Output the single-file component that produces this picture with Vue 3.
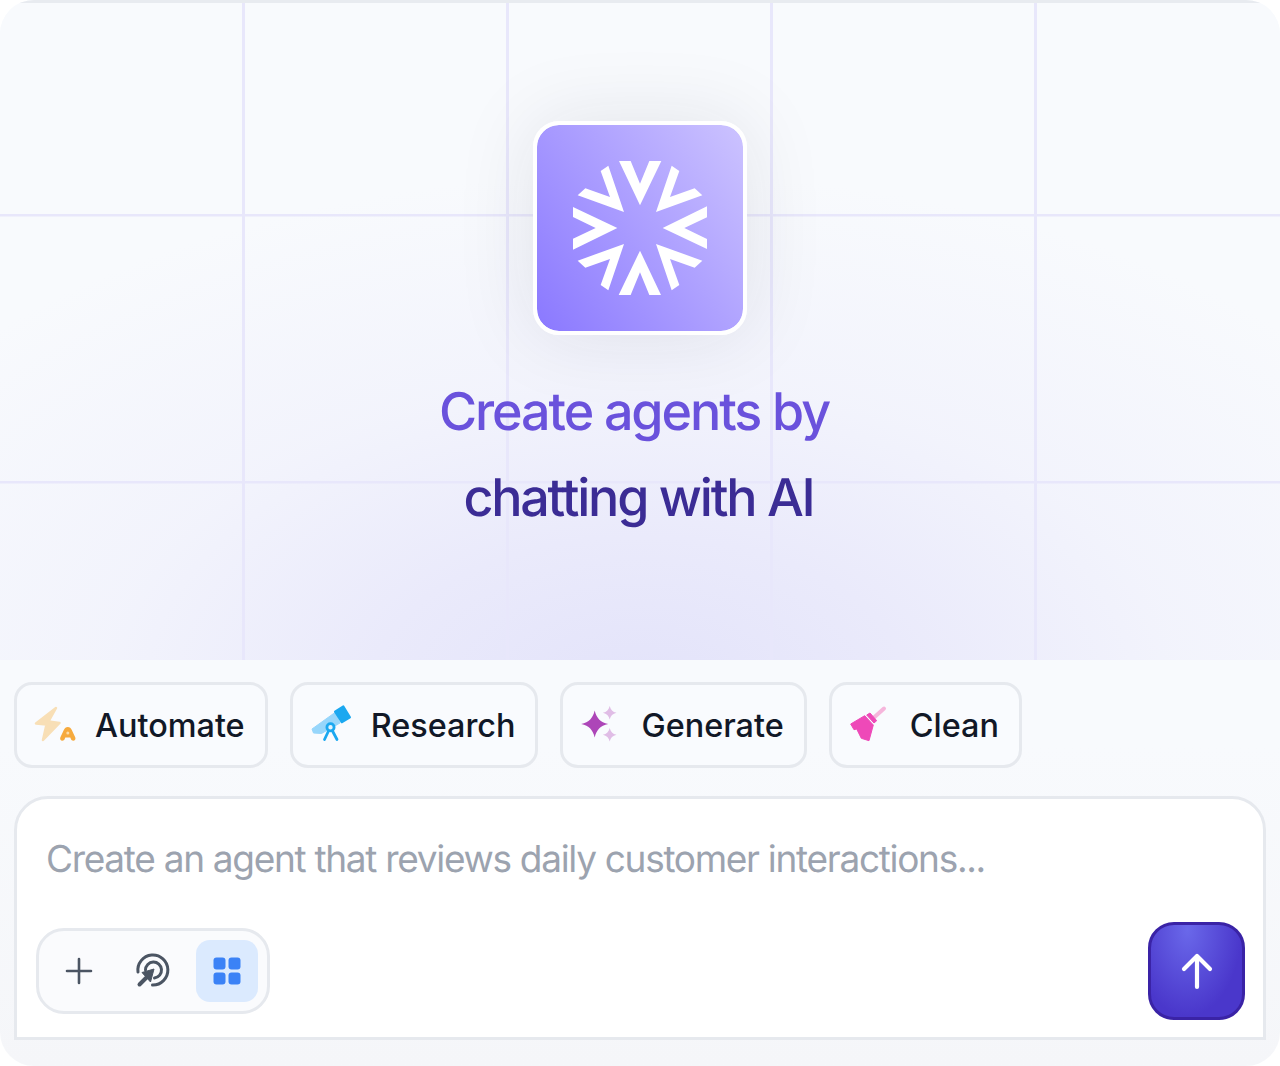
<template>
  <div class="card">
    <div class="hero">
      <div class="logo">
        <svg width="140" height="140" viewBox="210 173 420 420">
          <path fill="#fff" :d="logoPath" />
        </svg>
      </div>
      <h1 class="title">
        <span class="line-one">Create agents by</span>
        <span class="line-two">chatting with AI</span>
      </h1>
    </div>

    <div class="chips">
      <button v-for="chip in chips" :key="chip.label" class="chip">
        <svg class="chip-icon" width="44" height="44" viewBox="0 0 44 44">
          <template v-if="chip.label === 'Automate'">
            <path d="M22 5 2 20.500 12.500 21.500 9 37 25.500 20 14.500 18.500Z" fill="#f8dfb6" stroke="#f8dfb6" stroke-width="2.500" stroke-linejoin="round" />
            <path d="M33.800 24c2 0 3 1 4 3l3.500 7.500c.6 1.600-.4 3.200-2 3.200-1.200 0-2-.6-2.400-1.600l-.6-1.600h-5l-.6 1.600c-.4 1-1.200 1.600-2.400 1.600-1.600 0-2.600-1.600-2-3.200l3.500-7.500c1-2 2-3 4-3Z" fill="#f6aa3e" />
            <circle cx="33.800" cy="30" r="1.500" fill="#fbdba8" />
          </template>
          <template v-else-if="chip.label === 'Research'">
            <path d="M25 9.500 2 26 3.500 30 11.500 30.500 30 20Z" fill="#97d6fb" stroke="#97d6fb" stroke-linejoin="round" />
            <path d="M25 8.700 33.300 3.300 40 14.300 31.700 19.300Z" fill="#1ba8f0" stroke="#1ba8f0" stroke-width="2" stroke-linejoin="round" />
            <circle cx="20.500" cy="24.300" r="3.600" fill="#e3f4fe" stroke="#1ba8f0" stroke-width="2.800" />
            <path d="M18.500 28 14.500 36.500M22.500 28l4.500 8.500" fill="none" stroke="#1ba8f0" stroke-width="2.800" stroke-linecap="round" />
          </template>
          <template v-else-if="chip.label === 'Generate'">
            <path d="M14.700 7.500c1.800 7.500 5.500 11.700 13.500 13.500-8 1.800-11.700 6-13.500 13.500C12.900 27 9.200 22.800 1.200 21c8-1.800 11.700-6 13.500-13.500Z" fill="#ad46b8" />
            <path d="M29.700 3c.9 3.700 3 5.900 6.800 6.800-3.800.9-5.900 3.100-6.800 6.800-.9-3.700-3-5.900-6.800-6.800 3.800-.9 5.900-3.100 6.800-6.800ZM29.700 25c.9 3.700 3 5.900 6.800 6.800-3.800.9-5.900 3.100-6.800 6.800-.9-3.700-3-5.900-6.800-6.800 3.800-.9 5.900-3.100 6.800-6.800Z" fill="#e0bde6" />
          </template>
          <template v-else>
            <path d="M25 14.500 35 5.500" fill="none" stroke="#f6b6dc" stroke-width="4" stroke-linecap="round" />
            <path d="M17.700 12 21 10 27.700 17.700 25 20Z" fill="#ee49b8" stroke="#ee49b8" stroke-linejoin="round" />
            <path d="M1.700 21 15.700 12.700 24.300 22 20 37.700 12.300 35.300 7.700 26 5 26.700Z" fill="#ee49b8" stroke="#ee49b8" stroke-linejoin="round" />
          </template>
        </svg>
        <span>{{ chip.label }}</span>
      </button>
    </div>

    <div class="composer">
      <div class="placeholder">Create an agent that reviews daily customer interactions...</div>
      <div class="composer-foot">
        <div class="tools">
          <button class="tool">
            <svg width="28" height="28" viewBox="0 0 28 28">
              <path d="M14 2v24M2 14h24" fill="none" stroke="#4b5563" stroke-width="2.600" stroke-linecap="round" />
            </svg>
          </button>
          <button class="tool">
            <svg width="38" height="38" viewBox="0 0 38 38">
              <path d="M4 20A15 15 0 1 1 18.500 33M11.500 18A8 8 0 1 1 20.500 26" fill="none" stroke="#4b5563" stroke-width="3" stroke-linecap="round" />
              <path d="M5.500 32.500 13 25" fill="none" stroke="#4b5563" stroke-width="4" stroke-linecap="round" />
              <path d="M20 17 8 20.500 16.500 30Z" fill="#4b5563" stroke="#4b5563" stroke-linejoin="round" />
            </svg>
          </button>
          <button class="tool active">
            <svg width="30" height="30" viewBox="0 0 30 30">
              <rect x="1.500" y="1.500" width="12" height="12" rx="3" />
              <rect x="16.500" y="1.500" width="12" height="12" rx="3" />
              <rect x="1.500" y="16.500" width="12" height="12" rx="3" />
              <rect x="16.500" y="16.500" width="12" height="12" rx="3" />
            </svg>
          </button>
        </div>
        <button class="send">
          <svg width="34" height="38" viewBox="0 0 34 38">
            <path d="M17 35V4M4 17 17 4l13 13" fill="none" stroke="#fff" stroke-width="4.200" stroke-linecap="round" stroke-linejoin="round" />
          </svg>
        </button>
      </div>
    </div>
  </div>
</template>

<script setup>
const chips = [
  { label: "Automate" },
  { label: "Research" },
  { label: "Generate" },
  { label: "Clean" },
];

// top chevron, then the others; each listed once and mirrored below
const pieces = [
  [[357, 182], [392, 182], [420, 250], [448, 182], [484, 182], [420, 315]],
  [[325, 196], [372, 335], [233, 285], [256, 264], [330, 290], [302, 212]],
  [[219, 320], [352, 383], [219, 448], [219, 415], [287, 383], [219, 350]],
  [[515, 196], [468, 335], [607, 285], [584, 264], [510, 290], [538, 212]],
];

const toPath = (pts) => "M" + pts.map((p) => p.join(" ")).join("L") + "Z";
const mirror = (pts) => pts.map(([x, y]) => [840 - x, 766 - y]);

const logoPath = pieces.map((p) => toPath(p) + toPath(mirror(p))).join("");
</script>

<style>
html,
body {
  background: #fff;
}
</style>

<style scoped>
.card {
  height: 1066px;
  box-sizing: border-box;
  display: flex;
  flex-direction: column;
  border-radius: 34px;
  overflow: hidden;
  background: linear-gradient(#f8fafd 70%, #f5f6f9);
  font-family: Inter, "Liberation Sans", sans-serif;
  text-rendering: geometricPrecision;
  position: relative;
}

/* grid lines + lavender glow */
.hero {
  height: 660px;
  flex-shrink: 0;
  display: flex;
  flex-direction: column;
  align-items: center;
  padding-top: 121px;
  box-sizing: border-box;
  border-top: 3px solid #e8ebf0;
  background:
    linear-gradient(#e8e7fb, #e8e7fb) 0 211px / 100% 2.500px no-repeat,
    linear-gradient(#e8e7fb, #e8e7fb) 0 478px / 100% 2.500px no-repeat,
    linear-gradient(90deg, #e8e7fb 3px, transparent 3px) 242px 0 / 264px 100% repeat-x,
    radial-gradient(ellipse 900px 520px at 50% 105%, #e3e3fa 0%, #eaeafb 30%, rgba(241, 242, 252, 0.8) 60%, rgba(248, 250, 253, 0) 100%),
    #f8fafd;
}

.logo {
  width: 206px;
  height: 206px;
  margin-top: -3px;
  border: 4px solid #fff;
  border-radius: 26px;
  display: flex;
  align-items: center;
  justify-content: center;
  background: linear-gradient(55deg, #8a78ff, #ccc3ff);
  background-clip: padding-box;
  box-shadow: 0 0 80px rgba(30, 30, 60, 0.1);
  flex-shrink: 0;
}

.title {
  margin: 34px 0 0;
  font-size: 52px;
  font-weight: 500;
  line-height: 86px;
  letter-spacing: -2.2px;
  text-align: center;
}

.title span {
  display: block;
}

.line-one {
  color: #6a52dc;
  margin-left: -12px;
  letter-spacing: -2.070px;
}

.line-two {
  color: #3b2c95;
  margin-left: -3px;
}

.chips {
  display: flex;
  gap: 22px;
  padding: 22px 14px 0;
}

.chip {
  height: 86px;
  box-sizing: border-box;
  display: flex;
  align-items: center;
  gap: 17px;
  padding: 0 20px 0 17px;
  border: 3px solid #e6e9ee;
  border-radius: 18px;
  background: #f9fbfe;
  font: 500 32.400px Inter, "Liberation Sans", sans-serif;
  color: #111827;
}

.composer {
  margin: 28px 14px 0;
  height: 244px;
  box-sizing: border-box;
  background: #fff;
  border: 3px solid #e6e9ee;
  border-radius: 34px 34px 0 0;
  padding: 0 18px 17px 19px;
  display: flex;
  flex-direction: column;
  justify-content: space-between;
}

.placeholder {
  margin: 38px 0 0 10px;
  font-size: 37px;
  line-height: 44px;
  letter-spacing: -1.300px;
  color: #9ca3af;
}

.composer-foot {
  display: flex;
  justify-content: space-between;
  align-items: flex-end;
}

.tools {
  width: 234px;
  height: 86px;
  box-sizing: border-box;
  display: flex;
  align-items: center;
  padding: 0 9px;
  gap: 12px;
  margin-bottom: 6px;
  border: 3px solid #e6e9ee;
  border-radius: 28px;
  background: #fafbfd;
}

.tool {
  width: 62px;
  height: 62px;
  padding: 0;
  border: none;
  border-radius: 14px;
  background: none;
  display: flex;
  align-items: center;
  justify-content: center;
}

.tool.active {
  background: #dbeafe;
}

.tool.active svg {
  fill: #3b82f6;
}

.send {
  width: 97px;
  height: 98px;
  padding: 0;
  box-sizing: border-box;
  border: 3px solid #3a23a6;
  border-radius: 26px;
  background: radial-gradient(ellipse at 40% 5%, #6a68ea, #4a37cb 70%);
  display: flex;
  align-items: center;
  justify-content: center;
}
</style>
